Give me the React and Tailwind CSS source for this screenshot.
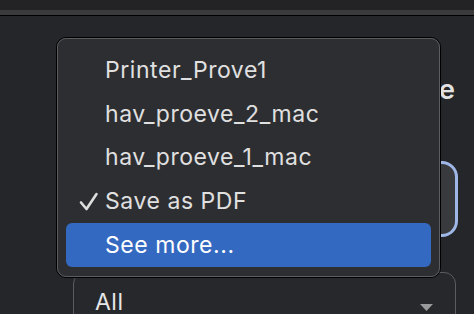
import React from "react";

const items = ["Printer_Prove1", "hav_proeve_2_mac", "hav_proeve_1_mac", "Save as PDF", "See more..."];

export default function App() {
  return (
    <div className="relative w-[474px] h-[314px] overflow-hidden bg-[#252629] font-['Inter','Liberation_Sans',sans-serif]">
      <div className="h-[10px] bg-[#232325]" />
      <div className="h-[5px] bg-[#3a3a3c]" />
      <div className="h-px bg-black" />
      <div className="ml-[73px] w-[383px] flex flex-col">
        <div className="mt-[57px] flex justify-end text-[27px] font-semibold text-[#e2e2e2] leading-[34px] pr-[1px]">
          Destinatione
        </div>
        <div className="mt-[54px] h-[76px] rounded-[16px] border-[3px] border-[#9fb7e6] bg-[#393a3d] mr-[-2px]" />
        <div className="mt-[35px] h-[60px] rounded-[12px] border-[1.5px] border-[#5c5c5f] bg-[#27282b] flex items-start justify-between pl-[21px] pr-[22px] pt-[15px]">
          <span className="text-[23px] tracking-[0.5px] text-[#e6e6e6] leading-[28px]">All</span>
          <svg width="13" height="8" viewBox="0 0 13 8" className="mt-[16px]">
            <path d="M0 0 L13 0 L6.5 7 Z" fill="#9a9a9d" />
          </svg>
        </div>
      </div>

      <div className="absolute left-[56px] top-[37px] w-[385px] h-[241px] rounded-[10px] border border-black">
        <div className="h-full w-full rounded-[9px] border border-[#5d5d60] bg-[#2d2e31] px-[8px] py-[9px] flex flex-col">
          {items.map((t, i) => {
            const hl = i === 4;
            return (
              <div
                key={t}
                className={
                  "h-[44px] flex items-center rounded-[6px] text-[23px] tracking-[0.55px] leading-[28px] " +
                  (hl ? "bg-[#3469c1] text-white" : "text-[#e0e0e0]")
                }
              >
                <div className="w-[39px] flex justify-center">
                  {i === 3 && (
                    <svg width="20" height="20" viewBox="0 0 20 20" className="ml-[7px] mt-[2px]">
                      <path d="M2 10.5 L7.5 17 L17.5 2" fill="none" stroke="#dedede" strokeWidth="2.6" strokeLinecap="round" strokeLinejoin="round" />
                    </svg>
                  )}
                </div>
                <span>{t}</span>
              </div>
            );
          })}
        </div>
      </div>
    </div>
  );
}
